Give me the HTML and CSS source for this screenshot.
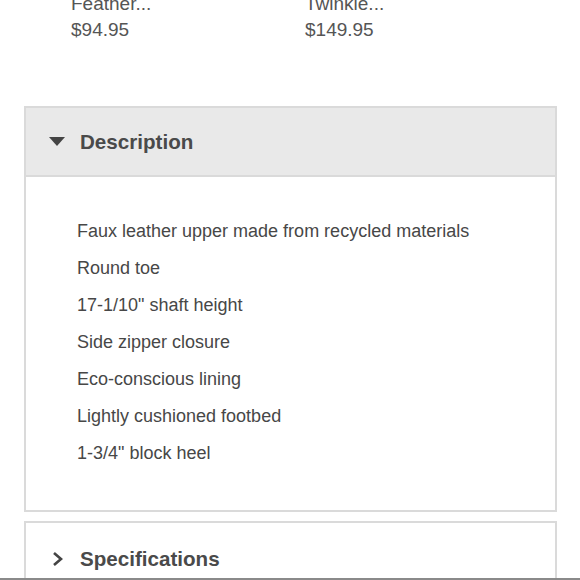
FILE: index.html
```
<!DOCTYPE html>
<html>
<head>
<meta charset="utf-8">
<link rel="stylesheet" href="styles.css">
</head>
<body>
<div class="products">
  <div class="product">
    <div class="name">Feather...</div>
    <div class="price">$94.95</div>
  </div>
  <div class="product second">
    <div class="name">Twinkle...</div>
    <div class="price">$149.95</div>
  </div>
</div>
<section class="card open">
  <div class="card-head">
    <svg class="icon" width="16" height="10" viewBox="0 0 16 10"><polygon points="0,0 16,0 8,9" fill="#444"/></svg>
    <span class="title">Description</span>
  </div>
  <ul class="list">
    <li>Faux leather upper made from recycled materials</li>
    <li>Round toe</li>
    <li>17-1/10" shaft height</li>
    <li>Side zipper closure</li>
    <li>Eco-conscious lining</li>
    <li>Lightly cushioned footbed</li>
    <li>1-3/4" block heel</li>
  </ul>
</section>
<section class="card closed">
  <div class="card-head plain">
    <svg class="icon chev" width="12" height="16" viewBox="0 0 12 16"><polyline points="2,2 9,8 2,14" fill="none" stroke="#444" stroke-width="2.6"/></svg>
    <span class="title">Specifications</span>
  </div>
</section>
<div class="bottom-line"></div>
</body>
</html>
```
FILE: styles.css
```
html, body {
  margin: 0;
  padding: 0;
  background: #fff;
  overflow: hidden;
  height: 580px;
}
body {
  font-family: "Liberation Sans", Arial, sans-serif;
  color: #555;
}
.products {
  display: flex;
  padding-left: 71px;
  margin-top: -9px;
  height: 115px;
}
.product {
  width: 234px;
}
.name, .price {
  font-size: 19px;
  line-height: 26px;
  color: #555;
}
.card {
  margin-left: 24px;
  width: 529px;
  border: 2px solid #dadada;
}
.card-head {
  display: flex;
  align-items: center;
  height: 67px;
  background: #e9e9e9;
  border-bottom: 2px solid #dadada;
  padding-left: 23px;
}
.card-head.plain {
  background: #fff;
  border-bottom: none;
  height: 70px;
  padding-top: 1px;
  padding-left: 26px;
}
.icon {
  margin-right: 15px;
}
.chev {
  margin-right: 16px;
}
.title {
  font-weight: bold;
  font-size: 20.6px;
  color: #4a4a4a;
}
.list {
  list-style: none;
  margin: 0;
  padding: 36px 0 38px 51px;
}
.list li {
  font-size: 18px;
  line-height: 37px;
  color: #474747;
}
.closed {
  margin-top: 9px;
}
.bottom-line {
  position: fixed;
  left: 0;
  right: 0;
  bottom: 0;
  height: 2px;
  background: #8a8a8a;
}
```
